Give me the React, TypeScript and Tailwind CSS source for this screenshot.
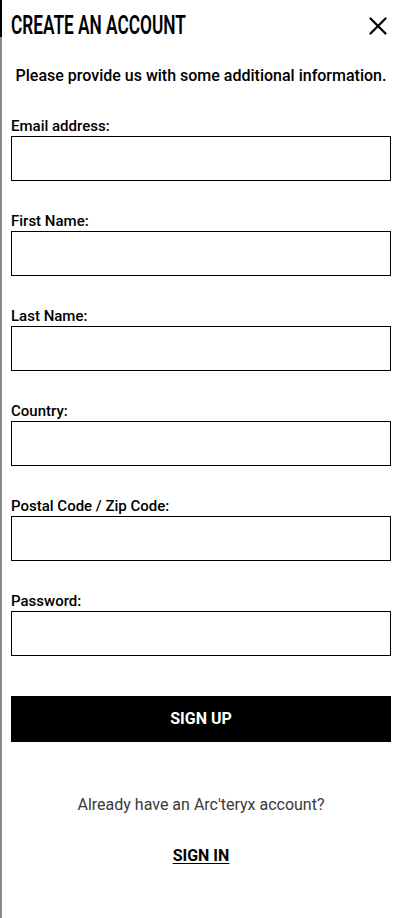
import { X } from "lucide-react";

const fields = [
  "Email address:",
  "First Name:",
  "Last Name:",
  "Country:",
  "Postal Code / Zip Code:",
  "Password:",
];

function Field({ label }: { label: string }) {
  return (
    <div className="flex flex-col">
      <label className="text-[15px] leading-[18px] font-medium text-black">{label}</label>
      <input
        type={label === "Password:" ? "password" : "text"}
        className="mt-[1px] h-[45px] w-full border border-black bg-white outline-none"
      />
    </div>
  );
}

export default function App() {
  return (
    <div
      className="relative w-[400px] h-[918px] bg-white border-l-2 border-[#8a8a8a] pl-[9px] pr-[9px]"
      style={{ fontFamily: "Roboto, 'Liberation Sans', sans-serif" }}
    >
      {/* dark edge segment at top */}
      <div className="absolute left-[-2px] top-0 h-[37px] w-[2px] bg-black" />

      {/* Header */}
      <div className="flex items-center justify-between pt-[11px]">
        <h1 className="h-[30px] text-[25px] leading-[30px] font-semibold text-black whitespace-nowrap origin-left scale-x-[0.69]">
          CREATE AN ACCOUNT
        </h1>
        <button className="mr-[-2px] mt-[-1px] text-black" aria-label="close">
          <X size={30} strokeWidth={1.8} />
        </button>
      </div>

      <p className="mt-[25px] text-center text-[16px] leading-[19px] font-medium text-black">
        Please provide us with some additional information.
      </p>

      {/* Form */}
      <div className="mt-[32px] flex flex-col gap-[31px]">
        {fields.map((f) => (
          <Field key={f} label={f} />
        ))}
      </div>

      <button className="mt-[40px] h-[46px] w-full bg-black text-white text-[16px] font-bold">
        SIGN UP
      </button>

      <p className="mt-[53px] text-center text-[16px] leading-[19px] text-[#3a3a3a]">
        Already have an Arc'teryx account?
      </p>

      <div className="mt-[32px] text-center leading-[19px]">
        <a href="#" className="text-[16px] leading-[19px] font-bold text-black underline underline-offset-[2px]">
          SIGN IN
        </a>
      </div>
    </div>
  );
}
